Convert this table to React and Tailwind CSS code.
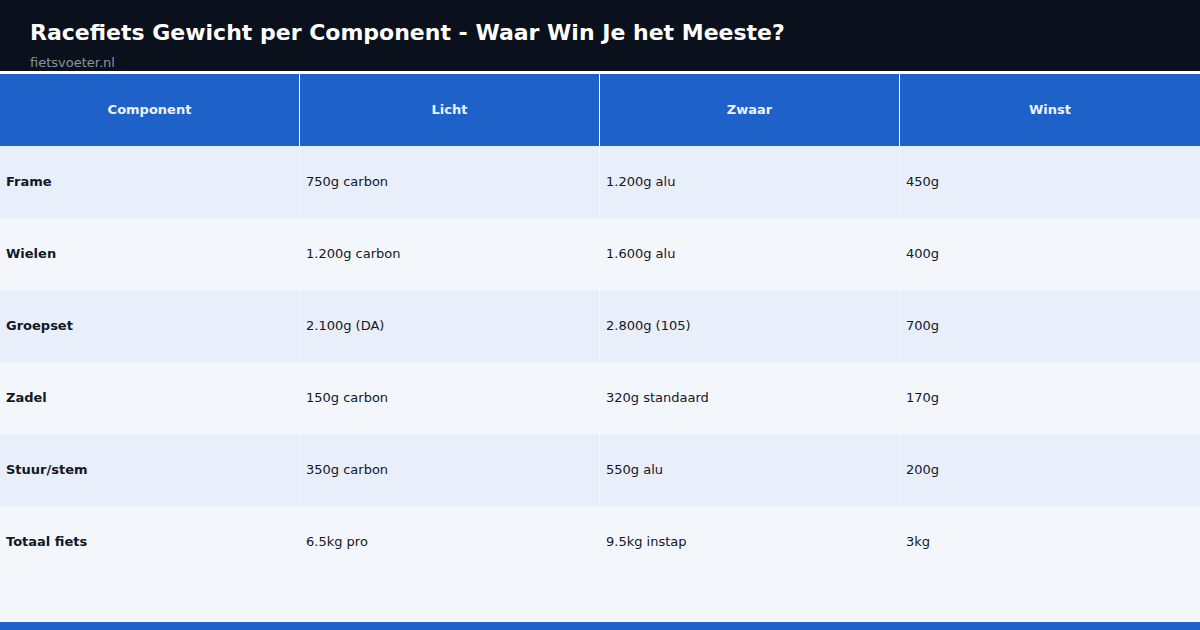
const rows = [
  ["Frame", "750g carbon", "1.200g alu", "450g"],
  ["Wielen", "1.200g carbon", "1.600g alu", "400g"],
  ["Groepset", "2.100g (DA)", "2.800g (105)", "700g"],
  ["Zadel", "150g carbon", "320g standaard", "170g"],
  ["Stuur/stem", "350g carbon", "550g alu", "200g"],
  ["Totaal fiets", "6.5kg pro", "9.5kg instap", "3kg"],
];

const heads = ["Component", "Licht", "Zwaar", "Winst"];

export default function App() {
  return (
    <div
      className="w-[1200px] h-[630px] flex flex-col bg-[#f3f6fb] overflow-hidden"
      style={{ fontFamily: '"DejaVu Sans", sans-serif' }}
    >
      <header className="h-[71px] shrink-0 bg-[#0b111c] px-[30px] pt-[20px]">
        <h1 className="text-[22px] leading-[26px] font-bold text-white">
          Racefiets Gewicht per Component - Waar Win Je het Meeste?
        </h1>
        <p className="text-[13px] leading-[16px] mt-[9px] text-[#8b93a1]">fietsvoeter.nl</p>
      </header>
      <div className="h-[3px] shrink-0 bg-white" />
      <table className="w-full table-fixed border-separate border-spacing-0">
        <thead>
          <tr className="h-[72px] bg-[#1e62c9]">
            {heads.map((h, i) => (
              <th
                key={h}
                className={`text-[13px] font-bold text-[#eef3fc] text-center ${i < 3 ? "border-r border-white" : ""}`}
              >
                {h}
              </th>
            ))}
          </tr>
        </thead>
        <tbody>
          {rows.map((r, ri) => (
            <tr key={r[0]} className={`h-[72px] ${ri % 2 === 0 ? "bg-[#e8eefa]" : "bg-[#f3f6fb]"}`}>
              {r.map((c, ci) => (
                <td
                  key={ci}
                  className={`px-[6px] text-[13px] text-[#111827] ${ci === 0 ? "font-bold" : ""} ${ci < 3 ? "border-r border-[#f5f8fd]" : ""}`}
                >
                  {c}
                </td>
              ))}
            </tr>
          ))}
        </tbody>
      </table>
      <div className="flex-1" />
      <div className="h-[8px] shrink-0 bg-[#1e62c9]" />
    </div>
  );
}
